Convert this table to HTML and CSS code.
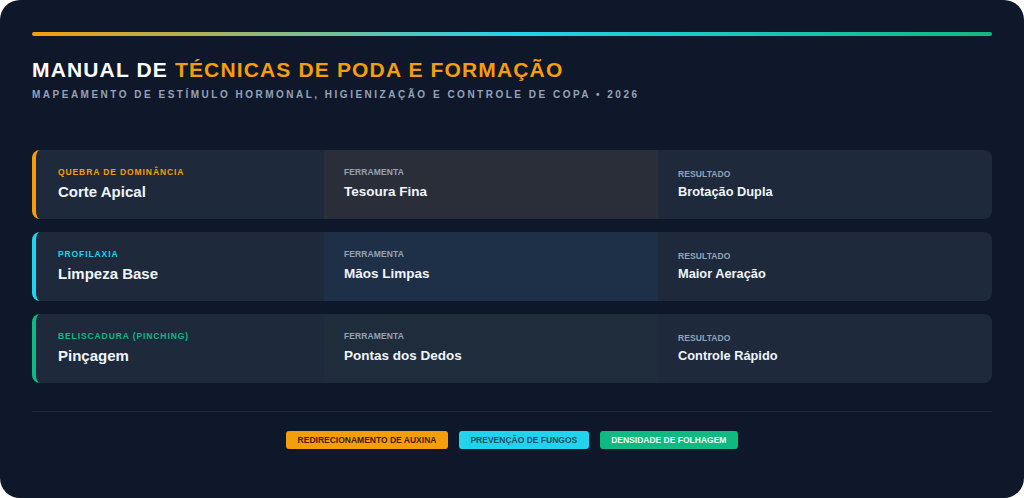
FILE: index.html
```html
<!DOCTYPE html>
<html lang="pt">
<head>
<meta charset="utf-8">
<link rel="stylesheet" href="styles.css">
</head>
<body>
<div class="frame">
  <div class="accent-bar"></div>
  <header class="header">
    <h1 class="title">MANUAL DE <span class="hl">TÉCNICAS DE PODA E FORMAÇÃO</span></h1>
    <p class="subtitle">MAPEAMENTO DE ESTÍMULO HORMONAL, HIGIENIZAÇÃO E CONTROLE DE COPA • 2026</p>
  </header>
  <section class="rows">
    <div class="row row-orange">
      <div class="cell cell-main">
        <div class="tag">QUEBRA DE DOMINÂNCIA</div>
        <div class="value">Corte Apical</div>
      </div>
      <div class="cell cell-mid">
        <div class="label">FERRAMENTA</div>
        <div class="value">Tesoura Fina</div>
      </div>
      <div class="cell cell-end">
        <div class="label">RESULTADO</div>
        <div class="value">Brotação Dupla</div>
      </div>
    </div>
    <div class="row row-cyan">
      <div class="cell cell-main">
        <div class="tag">PROFILAXIA</div>
        <div class="value">Limpeza Base</div>
      </div>
      <div class="cell cell-mid">
        <div class="label">FERRAMENTA</div>
        <div class="value">Mãos Limpas</div>
      </div>
      <div class="cell cell-end">
        <div class="label">RESULTADO</div>
        <div class="value">Maior Aeração</div>
      </div>
    </div>
    <div class="row row-green">
      <div class="cell cell-main">
        <div class="tag">BELISCADURA (PINCHING)</div>
        <div class="value">Pinçagem</div>
      </div>
      <div class="cell cell-mid">
        <div class="label">FERRAMENTA</div>
        <div class="value">Pontas dos Dedos</div>
      </div>
      <div class="cell cell-end">
        <div class="label">RESULTADO</div>
        <div class="value">Controle Rápido</div>
      </div>
    </div>
  </section>
  <footer class="footer">
    <span class="badge badge-orange">REDIRECIONAMENTO DE AUXINA</span>
    <span class="badge badge-cyan">PREVENÇÃO DE FUNGOS</span>
    <span class="badge badge-green">DENSIDADE DE FOLHAGEM</span>
  </footer>
</div>
</body>
</html>
```

FILE: styles.css
```css
* { box-sizing: border-box; margin: 0; padding: 0; }
html, body { width: 1024px; height: 498px; }
body {
  background: #ffffff;
  font-family: "Liberation Sans", Arial, sans-serif;
  overflow: hidden;
}
.frame {
  width: 1024px;
  height: 498px;
  background: #0f172a;
  border-radius: 20px;
  padding: 32px 32px 0;
  display: flex;
  flex-direction: column;
}
.accent-bar {
  height: 4px;
  border-radius: 2px;
  background: linear-gradient(90deg, #f59e0b 0%, #22d3ee 50%, #10b981 100%);
}
.header { padding-top: 22px; }
.title {
  font-size: 21px;
  font-weight: 700;
  letter-spacing: 1.15px;
  color: #ffffff;
  line-height: 24px;
}
.title .hl { color: #f59e0b; }
.subtitle {
  margin-top: 7px;
  font-size: 10px;
  font-weight: 700;
  letter-spacing: 2.5px;
  color: #94a3b8;
  line-height: 12px;
}
.rows {
  margin-top: 49px;
  display: flex;
  flex-direction: column;
  gap: 13px;
}
.row {
  height: 69px;
  display: grid;
  grid-template-columns: 288px 1fr 1fr;
  background: #1e293b;
  border-radius: 8px;
  border-left: 4px solid #f59e0b;
  overflow: hidden;
}
.row-cyan { border-left-color: #22d3ee; }
.row-green { border-left-color: #10b981; }
.cell {
  padding: 17px 20px 0;
  display: flex;
  flex-direction: column;
  gap: 5px;
}
.cell-main { padding-left: 22px; }
.cell-end { padding-top: 19px; gap: 3px; }
.row-orange .cell-mid { background: #292e39; }
.row-cyan .cell-mid { background: #1e3047; }
.row-green .cell-mid { background: #1e2c3c; }
.tag {
  font-size: 8.5px;
  font-weight: 700;
  letter-spacing: 0.9px;
  line-height: 11px;
}
.row-orange .tag { color: #f59e0b; }
.row-cyan .tag { color: #22d3ee; }
.row-green .tag { color: #10b981; }
.label {
  font-size: 8.5px;
  font-weight: 700;
  letter-spacing: 0.1px;
  line-height: 11px;
  color: #94a3b8;
}
.value {
  font-size: 13.5px;
  font-weight: 700;
  color: #f1f5f9;
  line-height: 17px;
}
.cell-main .value { font-size: 15px; }
.cell-end .value { font-size: 12.8px; }
.footer {
  margin-top: 28px;
  border-top: 1px solid #1e293b;
  padding-top: 19px;
  display: flex;
  justify-content: center;
  gap: 11px;
}
.badge {
  font-size: 8.5px;
  font-weight: 700;
  line-height: 18px;
  padding: 0 11.5px;
  border-radius: 3px;
}
.badge-orange { background: #f59e0b; color: #451a03; }
.badge-cyan { background: #22d3ee; color: #164e63; }
.badge-green { background: #10b981; color: #ecfdf5; }
```
